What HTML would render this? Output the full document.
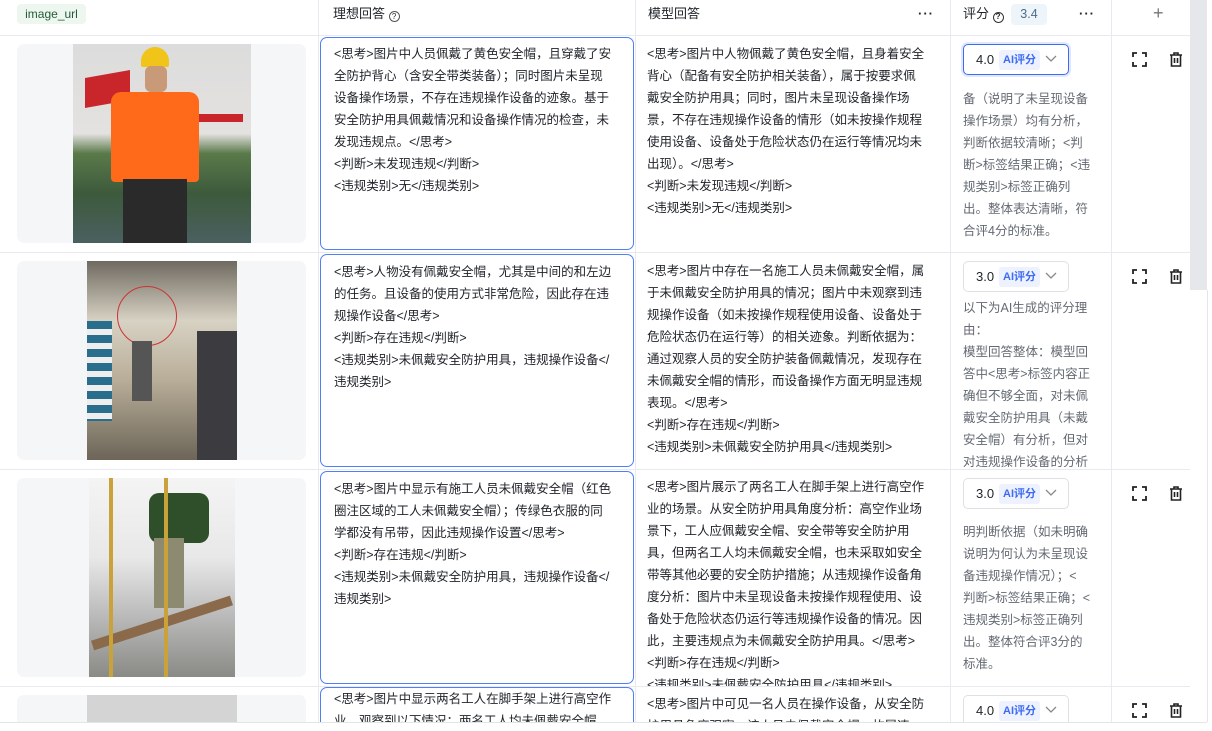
<!DOCTYPE html>
<html><head><meta charset="utf-8"><style>
*{box-sizing:border-box;margin:0;padding:0}
html,body{width:1212px;height:731px;overflow:hidden;background:#fff}
body{font-family:"Liberation Sans","Noto Sans CJK SC",sans-serif;color:#1f2329;position:relative}
#w{position:absolute;left:0;top:0;width:1212px;height:722px;overflow:hidden}
.a{position:absolute}
.vl{position:absolute;top:0;width:1px;background:#e8eaef;height:722px}
.hl{position:absolute;left:0;width:1190px;height:1px;background:#e8eaef}
.th{position:absolute;top:0;height:35px;line-height:27px;font-size:13px;color:#1f2329}
.txt{font-size:12.5px;line-height:22px;white-space:nowrap}
.box{position:absolute;left:320px;width:314px;height:213px;border:1.5px solid #4f7ff7;border-radius:7px;padding:10px 0 0 13px;overflow:hidden;background:#fff}
.imgbg{position:absolute;left:17px;width:289px;height:199px;background:#f5f6f8;border-radius:7px;overflow:hidden}
.mod{position:absolute;left:647px;color:#1f2329}
.rs{position:absolute;left:963px;color:#646a73}
.dd{position:absolute;left:963px;width:106px;height:31px;border:1px solid #dee0e3;border-radius:5px;font-size:13px}
.dd .v{position:absolute;left:12px;top:7px}
.dd .t{position:absolute;left:35px;top:5px;height:20px;line-height:20px;padding:0 4px;background:#eef2ff;color:#3d6bf3;font-size:11px;font-weight:bold;border-radius:3px}
.dd svg{position:absolute;left:80px;top:9px}
.ic{position:absolute}
</style></head><body><div id="w">
<div class="a" style="left:1190px;top:0;width:17px;height:290px;background:#e6e7eb"></div>
<div class="vl" style="left:318px"></div>
<div class="vl" style="left:635px"></div>
<div class="vl" style="left:950px"></div>
<div class="vl" style="left:1111px"></div>
<div class="hl" style="top:35px"></div>
<div class="hl" style="top:252px"></div>
<div class="hl" style="top:469px"></div>
<div class="hl" style="top:686px"></div>

<div class="a" style="left:17px;top:4px;width:69px;height:20px;background:#edf7f0;border-radius:4px;color:#245a3a;font-size:12px;line-height:20px;text-align:center">image_url</div>
<div class="th" style="left:333px">理想回答 <span style="display:inline-block;width:11px;height:11px;border:1px solid #555;border-radius:50%;font-size:8px;line-height:9px;text-align:center;vertical-align:-1px">?</span></div>
<div class="th" style="left:648px">模型回答</div>
<div class="th" style="left:918px;font-weight:bold;letter-spacing:1px">···</div>
<div class="th" style="left:963px">评分 <span style="display:inline-block;width:11px;height:11px;border:1.5px solid #333;border-radius:50%;font-size:8px;line-height:8px;text-align:center;vertical-align:-1px;font-weight:bold">?</span></div>
<div class="a" style="left:1011px;top:4px;width:36px;height:21px;background:#edf5fb;border-radius:4px;color:#4c6d86;font-size:12.5px;line-height:21px;text-align:center">3.4</div>
<div class="th" style="left:1079px;font-weight:bold;letter-spacing:1px">···</div>
<div class="th" style="left:1153px;font-size:18px;color:#777;top:0">+</div>

<div class="imgbg" style="top:44px">
 <div class="a" style="left:56px;top:0;width:178px;height:199px;background:linear-gradient(#dcdcdc 0,#e4e2e0 45%,#5a7a4a 55%,#3d5a3c 75%,#4a6060 100%)">
  <div class="a" style="left:12px;top:30px;width:45px;height:30px;background:#c8262b;transform:skewY(-10deg)"></div>
  <div class="a" style="left:60px;top:70px;width:110px;height:8px;background:#c8262b"></div>
  <div class="a" style="left:68px;top:3px;width:28px;height:20px;background:#f0c419;border-radius:14px 14px 2px 2px"></div>
  <div class="a" style="left:72px;top:22px;width:22px;height:26px;background:#c89a78;border-radius:6px"></div>
  <div class="a" style="left:38px;top:48px;width:88px;height:90px;background:#ff6a1a;border-radius:10px 10px 4px 4px"></div>
  <div class="a" style="left:50px;top:135px;width:64px;height:64px;background:#2a2a2a"></div>
 </div>
</div>
<div class="imgbg" style="top:261px">
 <div class="a" style="left:70px;top:0;width:150px;height:199px;background:linear-gradient(#6f6a60 0,#d8d2c4 30%,#b8ad98 60%,#6c6558 100%)">
  <div class="a" style="left:30px;top:25px;width:60px;height:60px;border:1.5px solid #c33;border-radius:50%"></div>
  <div class="a" style="left:0;top:60px;width:25px;height:100px;background:repeating-linear-gradient(#2a6e8e 0 8px,#eee 8px 14px)"></div>
  <div class="a" style="left:110px;top:70px;width:40px;height:129px;background:#3b3b40"></div>
  <div class="a" style="left:45px;top:80px;width:20px;height:60px;background:#555"></div>
 </div>
</div>
<div class="imgbg" style="top:478px">
 <div class="a" style="left:72px;top:0;width:146px;height:199px;background:linear-gradient(#f4f4f4 0,#e8e8e8 40%,#b9b9b9 70%,#8a8a86 100%)">
  <div class="a" style="left:60px;top:15px;width:60px;height:50px;background:#2f4f2a;border-radius:10px"></div>
  <div class="a" style="left:65px;top:60px;width:30px;height:70px;background:#8c8a70"></div>
  <div class="a" style="left:0;top:140px;width:146px;height:10px;background:#8a6a4a;transform:rotate(-18deg)"></div>
  <div class="a" style="left:20px;top:0;width:4px;height:199px;background:#c9a23a"></div>
  <div class="a" style="left:75px;top:0;width:4px;height:199px;background:#c9a23a"></div>
 </div>
</div>
<div class="imgbg" style="top:695px">
 <div class="a" style="left:70px;top:0;width:150px;height:199px;background:#d4d4d4"></div>
</div>

<div class="box txt" style="top:37px;padding-top:5px">&lt;思考&gt;图片中人员佩戴了黄色安全帽，且穿戴了安<br>全防护背心（含安全带类装备）；同时图片未呈现<br>设备操作场景，不存在违规操作设备的迹象。基于<br>安全防护用具佩戴情况和设备操作情况的检查，未<br>发现违规点。&lt;/思考&gt;<br>&lt;判断&gt;未发现违规&lt;/判断&gt;<br>&lt;违规类别&gt;无&lt;/违规类别&gt;</div>
<div class="box txt" style="top:254px;padding-top:6px">&lt;思考&gt;人物没有佩戴安全帽，尤其是中间的和左边<br>的任务。且设备的使用方式非常危险，因此存在违<br>规操作设备&lt;/思考&gt;<br>&lt;判断&gt;存在违规&lt;/判断&gt;<br>&lt;违规类别&gt;未佩戴安全防护用具，违规操作设备&lt;/<br>违规类别&gt;</div>
<div class="box txt" style="top:471px;padding-top:6px">&lt;思考&gt;图片中显示有施工人员未佩戴安全帽（红色<br>圈注区域的工人未佩戴安全帽）；传绿色衣服的同<br>学都没有吊带，因此违规操作设置&lt;/思考&gt;<br>&lt;判断&gt;存在违规&lt;/判断&gt;<br>&lt;违规类别&gt;未佩戴安全防护用具，违规操作设备&lt;/<br>违规类别&gt;</div>
<div class="box txt" style="top:687px;padding-top:0">&lt;思考&gt;图片中显示两名工人在脚手架上进行高空作<br>业，观察到以下情况：两名工人均未佩戴安全帽、</div>

<div class="mod txt" style="top:43px">&lt;思考&gt;图片中人物佩戴了黄色安全帽，且身着安全<br>背心（配备有安全防护相关装备），属于按要求佩<br>戴安全防护用具；同时，图片未呈现设备操作场<br>景，不存在违规操作设备的情形（如未按操作规程<br>使用设备、设备处于危险状态仍在运行等情况均未<br>出现）。&lt;/思考&gt;<br>&lt;判断&gt;未发现违规&lt;/判断&gt;<br>&lt;违规类别&gt;无&lt;/违规类别&gt;</div>
<div class="mod txt" style="top:260px">&lt;思考&gt;图片中存在一名施工人员未佩戴安全帽，属<br>于未佩戴安全防护用具的情况；图片中未观察到违<br>规操作设备（如未按操作规程使用设备、设备处于<br>危险状态仍在运行等）的相关迹象。判断依据为：<br>通过观察人员的安全防护装备佩戴情况，发现存在<br>未佩戴安全帽的情形，而设备操作方面无明显违规<br>表现。&lt;/思考&gt;<br>&lt;判断&gt;存在违规&lt;/判断&gt;<br>&lt;违规类别&gt;未佩戴安全防护用具&lt;/违规类别&gt;</div>
<div class="a" style="left:636px;top:470px;width:314px;height:216px;overflow:hidden">
<div class="mod txt" style="left:11px;top:6px">&lt;思考&gt;图片展示了两名工人在脚手架上进行高空作<br>业的场景。从安全防护用具角度分析：高空作业场<br>景下，工人应佩戴安全帽、安全带等安全防护用<br>具，但两名工人均未佩戴安全帽，也未采取如安全<br>带等其他必要的安全防护措施；从违规操作设备角<br>度分析：图片中未呈现设备未按操作规程使用、设<br>备处于危险状态仍运行等违规操作设备的情况。因<br>此，主要违规点为未佩戴安全防护用具。&lt;/思考&gt;<br>&lt;判断&gt;存在违规&lt;/判断&gt;<br>&lt;违规类别&gt;未佩戴安全防护用具&lt;/违规类别&gt;</div></div>
<div class="mod txt" style="top:693px">&lt;思考&gt;图片中可见一名人员在操作设备，从安全防<br>护用具角度观察，该人员未佩戴安全帽，故属违</div>

<div class="dd" style="top:44px;border:1.5px solid #3d6bf3;box-shadow:0 0 0 2px #dfe8fd"><span class="v">4.0</span><span class="t">AI评分</span><svg width="14" height="10"><path d="M2 2l5 5 5-5" fill="none" stroke="#888" stroke-width="1.3"/></svg></div>
<div class="dd" style="top:261px"><span class="v">3.0</span><span class="t">AI评分</span><svg width="14" height="10"><path d="M2 2l5 5 5-5" fill="none" stroke="#888" stroke-width="1.3"/></svg></div>
<div class="dd" style="top:478px"><span class="v">3.0</span><span class="t">AI评分</span><svg width="14" height="10"><path d="M2 2l5 5 5-5" fill="none" stroke="#888" stroke-width="1.3"/></svg></div>
<div class="dd" style="top:695px"><span class="v">4.0</span><span class="t">AI评分</span><svg width="14" height="10"><path d="M2 2l5 5 5-5" fill="none" stroke="#888" stroke-width="1.3"/></svg></div>

<div class="rs txt" style="top:88px">备（说明了未呈现设备<br>操作场景）均有分析，<br>判断依据较清晰；&lt;判<br>断&gt;标签结果正确；&lt;违<br>规类别&gt;标签正确列<br>出。整体表达清晰，符<br>合评4分的标准。</div>
<div class="a" style="left:951px;top:297px;width:159px;height:170px;overflow:hidden">
<div class="rs txt" style="left:12px;top:0">以下为AI生成的评分理<br>由：<br>模型回答整体：模型回<br>答中&lt;思考&gt;标签内容正<br>确但不够全面，对未佩<br>戴安全防护用具（未戴<br>安全帽）有分析，但对<br>对违规操作设备的分析</div></div>
<div class="rs txt" style="top:521px">明判断依据（如未明确<br>说明为何认为未呈现设<br>备违规操作情况）；&lt;<br>判断&gt;标签结果正确；&lt;<br>违规类别&gt;标签正确列<br>出。整体符合评3分的<br>标准。</div>

<svg class="ic" style="left:1132px;top:52px" width="15" height="15" viewBox="0 0 15 15"><path d="M1 5V1h4M10 1h4v4M14 10v4h-4M5 14H1v-4" fill="none" stroke="#222" stroke-width="1.8"/></svg>
<svg class="ic" style="left:1169px;top:52px" width="14" height="15" viewBox="0 0 14 15"><path d="M1 3h12M5 3V1h4v2M2.5 3v11h9V3M5.5 6v5M8.5 6v5" fill="none" stroke="#222" stroke-width="1.6"/></svg>
<svg class="ic" style="left:1132px;top:269px" width="15" height="15" viewBox="0 0 15 15"><path d="M1 5V1h4M10 1h4v4M14 10v4h-4M5 14H1v-4" fill="none" stroke="#222" stroke-width="1.8"/></svg>
<svg class="ic" style="left:1169px;top:269px" width="14" height="15" viewBox="0 0 14 15"><path d="M1 3h12M5 3V1h4v2M2.5 3v11h9V3M5.5 6v5M8.5 6v5" fill="none" stroke="#222" stroke-width="1.6"/></svg>
<svg class="ic" style="left:1132px;top:486px" width="15" height="15" viewBox="0 0 15 15"><path d="M1 5V1h4M10 1h4v4M14 10v4h-4M5 14H1v-4" fill="none" stroke="#222" stroke-width="1.8"/></svg>
<svg class="ic" style="left:1169px;top:486px" width="14" height="15" viewBox="0 0 14 15"><path d="M1 3h12M5 3V1h4v2M2.5 3v11h9V3M5.5 6v5M8.5 6v5" fill="none" stroke="#222" stroke-width="1.6"/></svg>
<svg class="ic" style="left:1132px;top:703px" width="15" height="15" viewBox="0 0 15 15"><path d="M1 5V1h4M10 1h4v4M14 10v4h-4M5 14H1v-4" fill="none" stroke="#222" stroke-width="1.8"/></svg>
<svg class="ic" style="left:1169px;top:703px" width="14" height="15" viewBox="0 0 14 15"><path d="M1 3h12M5 3V1h4v2M2.5 3v11h9V3M5.5 6v5M8.5 6v5" fill="none" stroke="#222" stroke-width="1.6"/></svg>
</div>
<div class="a" style="left:0;top:722px;width:1207px;height:1px;background:#e3e5e9"></div>
<div class="a" style="left:1207px;top:290px;width:1px;height:432px;background:#e3e5e9"></div>
</body></html>
